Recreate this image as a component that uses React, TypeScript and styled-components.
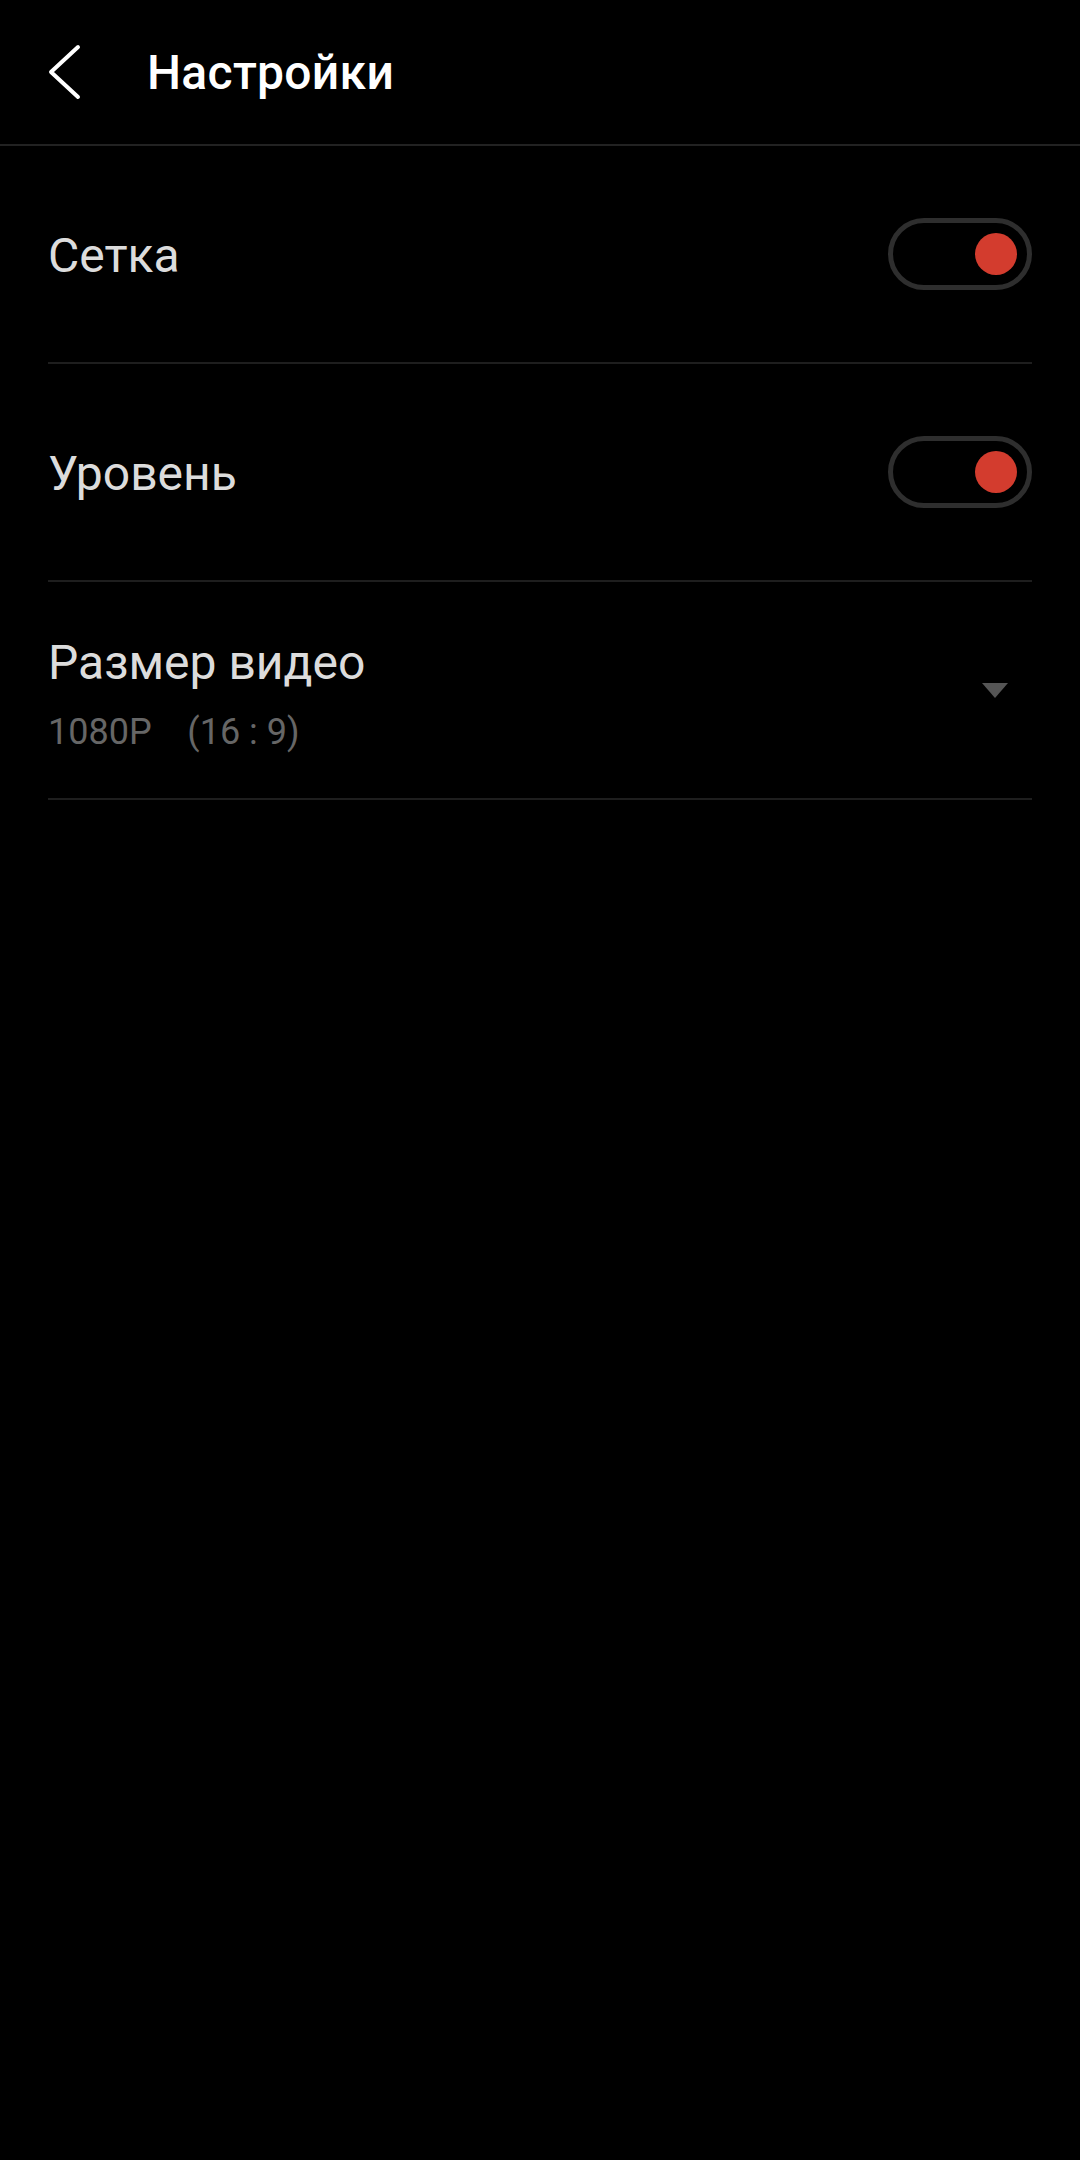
import React, { useState } from 'react';
import styled, { createGlobalStyle } from 'styled-components';

const GlobalStyle = createGlobalStyle`
  html, body {
    margin: 0;
    padding: 0;
    background: #000;
  }
  body {
    font-family: Roboto, 'Noto Sans', 'Liberation Sans', sans-serif;
    -webkit-font-smoothing: antialiased;
  }
`;

const Screen = styled.div`
  width: 1080px;
  min-height: 2160px;
  background: #000;
  display: flex;
  flex-direction: column;
`;

const Header = styled.header`
  height: 144px;
  display: flex;
  align-items: center;
  border-bottom: 2px solid #222;
  padding-left: 47px;
  box-sizing: content-box;
`;

const BackButton = styled.button`
  width: 36px;
  height: 56px;
  padding: 0;
  border: none;
  background: none;
  display: flex;
  align-items: center;
  justify-content: flex-start;
  cursor: pointer;
`;

const Title = styled.h1`
  margin: 0 0 0 64px;
  font-size: 48px;
  font-weight: 500;
  color: #fff;
  letter-spacing: 0.3px;
`;

const List = styled.div`
  display: flex;
  flex-direction: column;
  padding: 0 48px;
`;

const Row = styled.div`
  height: 216px;
  display: flex;
  align-items: center;
  justify-content: space-between;
  border-bottom: 2px solid #1e1e1e;
`;

const TextBlock = styled.div`
  display: flex;
  flex-direction: column;
  gap: 20px;
  padding-top: 5px;
`;

const Label = styled.span`
  font-size: 48px;
  color: #dcdcdc;
  line-height: 56px;
  padding-top: 3px;
`;

const Sub = styled.span`
  font-size: 36px;
  color: #666;
  white-space: pre;
  line-height: 42px;
`;

const Track = styled.button<{ $on: boolean }>`
  width: 144px;
  height: 72px;
  box-sizing: border-box;
  border: 5px solid #2e2e2e;
  border-radius: 36px;
  background: transparent;
  padding: 0 10px;
  display: flex;
  align-items: center;
  justify-content: ${(p) => (p.$on ? 'flex-end' : 'flex-start')};
  cursor: pointer;
`;

const Knob = styled.span<{ $on: boolean }>`
  width: 42px;
  height: 42px;
  border-radius: 50%;
  background: ${(p) => (p.$on ? '#d33c2e' : '#555')};
`;

const Caret = styled.div`
  width: 0;
  height: 0;
  margin-right: 24px;
  border-left: 13px solid transparent;
  border-right: 13px solid transparent;
  border-top: 15px solid #555;
`;

const Toggle = ({ on, onChange }: { on: boolean; onChange: () => void }) => (
  <Track $on={on} onClick={onChange} aria-pressed={on}>
    <Knob $on={on} />
  </Track>
);

export default function App() {
  const [grid, setGrid] = useState(true);
  const [level, setLevel] = useState(true);

  return (
    <Screen>
      <GlobalStyle />
      <Header>
        <BackButton aria-label="back">
          <svg width="34" height="56" viewBox="0 0 34 56" fill="none">
            <polyline
              points="31,3 4,28 31,53"
              stroke="#fff"
              strokeWidth="4"
              strokeLinecap="round"
              strokeLinejoin="round"
            />
          </svg>
        </BackButton>
        <Title>Настройки</Title>
      </Header>
      <List>
        <Row>
          <Label>Сетка</Label>
          <Toggle on={grid} onChange={() => setGrid(!grid)} />
        </Row>
        <Row>
          <Label>Уровень</Label>
          <Toggle on={level} onChange={() => setLevel(!level)} />
        </Row>
        <Row>
          <TextBlock>
            <Label>Размер видео</Label>
            <Sub>{'1080P    (16 : 9)'}</Sub>
          </TextBlock>
          <Caret />
        </Row>
      </List>
    </Screen>
  );
}
